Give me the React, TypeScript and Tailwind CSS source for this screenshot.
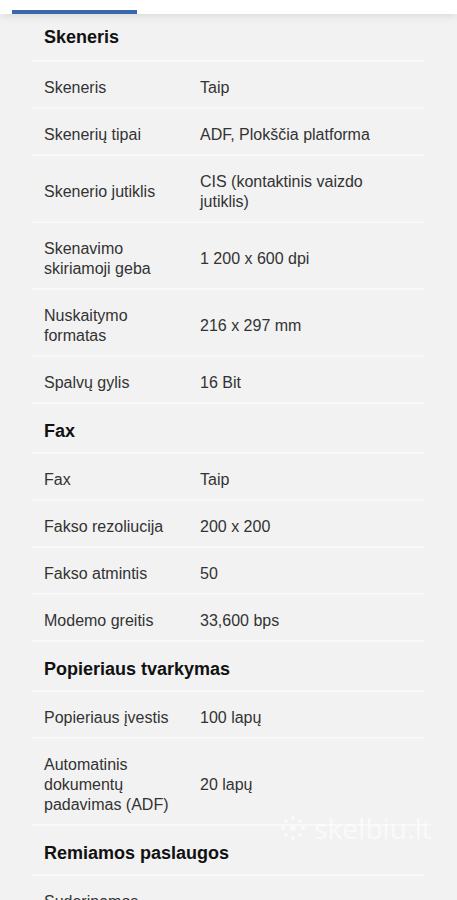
import React from "react";

type Row = { label: string; value: string };
type Section = { title: string; rows: Row[] };

const sections: Section[] = [
  {
    title: "Skeneris",
    rows: [
      { label: "Skeneris", value: "Taip" },
      { label: "Skenerių tipai", value: "ADF, Plokščia platforma" },
      { label: "Skenerio jutiklis", value: "CIS (kontaktinis vaizdo jutiklis)" },
      { label: "Skenavimo skiriamoji geba", value: "1 200 x 600 dpi" },
      { label: "Nuskaitymo formatas", value: "216 x 297 mm" },
      { label: "Spalvų gylis", value: "16 Bit" },
    ],
  },
  {
    title: "Fax",
    rows: [
      { label: "Fax", value: "Taip" },
      { label: "Fakso rezoliucija", value: "200 x 200" },
      { label: "Fakso atmintis", value: "50" },
      { label: "Modemo greitis", value: "33,600 bps" },
    ],
  },
  {
    title: "Popieriaus tvarkymas",
    rows: [
      { label: "Popieriaus įvestis", value: "100 lapų" },
      { label: "Automatinis dokumentų padavimas (ADF)", value: "20 lapų" },
    ],
  },
  {
    title: "Remiamos paslaugos",
    rows: [{ label: "Suderinamos operacinės sistemos", value: "Windows, macOS" }],
  },
];

export default function App() {
  return (
    <div
      className="relative h-[900px] w-[457px] overflow-hidden bg-[#f2f2f2]"
      style={{ fontFamily: '"Liberation Sans", Arial, sans-serif' }}
    >
      <div className="relative z-10 h-[14px] bg-white shadow-[0_2px_10px_rgba(0,0,0,0.10)]">
        <div className="absolute left-[12px] top-[10px] h-[4px] w-[125px] bg-[#3a69ab]" />
      </div>
      <div className="px-[32px] pr-[32px]">
        {sections.map((s, si) => (
          <div key={s.title}>
            <div
              className={
                "border-b-2 border-[#f8f8f8] px-3 text-[18px] font-bold leading-[24px] text-[#111] " +
                (si === 0 ? "pt-[11px] pb-[11px]" : "pt-[15px] pb-[9px]")
              }
            >
              {s.title}
            </div>
            {s.rows.map((r) => (
              <div
                key={r.label}
                className="flex items-center border-b-2 border-[#f8f8f8] text-[16px] leading-[20px] text-[#333]"
              >
                <div className="w-[156px] shrink-0 pl-3 pr-3 pt-4 pb-[9px]">{r.label}</div>
                <div className="flex-1 pl-3 pr-4 pt-4 pb-[9px]">{r.value}</div>
              </div>
            ))}
          </div>
        ))}
      </div>
      <div className="pointer-events-none absolute left-[280px] top-[813px] flex items-center gap-2 text-[28px] leading-[30px] text-white opacity-60">
        <svg width="26" height="26" viewBox="0 0 26 26" fill="white">
          <circle cx="13" cy="3" r="2" />
          <circle cx="13" cy="23" r="2" />
          <circle cx="3" cy="13" r="2" />
          <circle cx="23" cy="13" r="2" />
          <circle cx="6" cy="6" r="2" />
          <circle cx="20" cy="6" r="2" />
          <circle cx="6" cy="20" r="2" />
          <circle cx="20" cy="20" r="2" />
          <circle cx="13" cy="13" r="3" />
        </svg>
        <span style={{ fontFamily: '"Noto Sans", sans-serif' }}>skelbiu.lt</span>
      </div>
    </div>
  );
}
